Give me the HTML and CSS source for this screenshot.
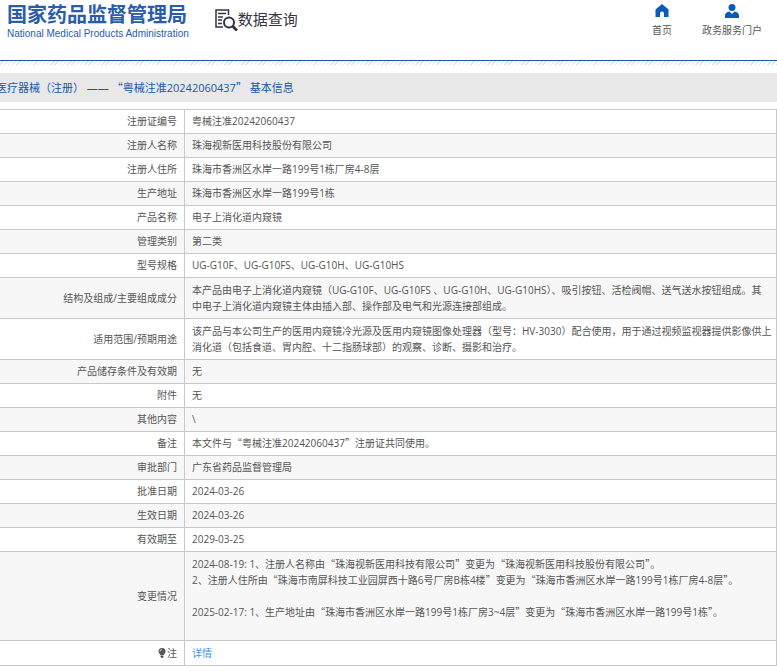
FILE: index.html
```html
<!DOCTYPE html>
<html lang="zh-CN">
	<head>
		<meta charset="utf-8">
		<title>数据查询</title>
		<link rel="stylesheet" href="styles.css">
	</head>
	<body>
		<header class="header">
			<div class="logo">
				<div class="logo-cn">国家药品监督管理局</div>
				<div class="logo-en">National Medical Products Administration</div>
			</div>
			<h1 class="query">
				<svg width="23" height="22" viewBox="0 0 23 22" fill="none" stroke="#35353f">
					<path d="M13.500 6V1H1v17h7" stroke-width="1.500"/>
					<path d="M3 4.500h8M3 8h5M3 11h4M3 14.500h4" stroke-width="1.500"/>
					<circle cx="14" cy="13.500" r="5" stroke-width="2"/>
					<path d="M17.500 17l4.500 4.500" stroke-width="3"/>
				</svg>
				<span>数据查询</span>
			</h1>
			<nav class="nav">
				<a href="#">
					<svg width="14" height="14" viewBox="0 0 14 14" fill="#0a5cb8"><path d="M7 0L0.500 5.500V13H5V9.500a2 2 0 0 1 4 0V13h4.500V5.500z"/></svg>
					<span>首页</span>
				</a>
				<a href="#">
					<svg width="14" height="14" viewBox="0 0 14 14" fill="#0a5cb8"><circle cx="7" cy="3.500" r="3.500"/><path d="M0 14v-2.500C0 9 2 8 4.500 7.500L7 10l2.500-2.500C12 8 14 9 14 11.500V14z"/></svg>
					<span>政务服务门户</span>
				</a>
			</nav>
		</header>
		<div class="stripes"></div>

		<h2 class="title">医疗器械（注册） —— <span class="cjk">“</span>粤械注准20242060437<span class="cjk">”</span> 基本信息</h2>

		<table class="info">
			<tr><th>注册证编号</th><td>粤械注准20242060437</td></tr>
			<tr><th>注册人名称</th><td>珠海视新医用科技股份有限公司</td></tr>
			<tr><th>注册人住所</th><td>珠海市香洲区水岸一路199号1栋厂房4-8层</td></tr>
			<tr><th>生产地址</th><td>珠海市香洲区水岸一路199号1栋</td></tr>
			<tr><th>产品名称</th><td>电子上消化道内窥镜</td></tr>
			<tr><th>管理类别</th><td>第二类</td></tr>
			<tr><th>型号规格</th><td>UG-G10F、UG-G10FS、UG-G10H、UG-G10HS</td></tr>
			<tr class="long"><th>结构及组成/主要组成成分</th><td>本产品由电子上消化道内窥镜（UG-G10F、UG-G10FS 、UG-G10H、UG-G10HS）、吸引按钮、活检阀帽、送气送水按钮组成。其<br>中电子上消化道内窥镜主体由插入部、操作部及电气和光源连接部组成。</td></tr>
			<tr class="long"><th>适用范围/预期用途</th><td>该产品与本公司生产的医用内窥镜冷光源及医用内窥镜图像处理器（型号：HV-3030）配合使用，用于通过视频监视器提供影像供上消化道（包括食道、胃内腔、十二指肠球部）的观察、诊断、摄影和治疗。</td></tr>
			<tr><th>产品储存条件及有效期</th><td>无</td></tr>
			<tr><th>附件</th><td>无</td></tr>
			<tr><th>其他内容</th><td>\</td></tr>
			<tr><th>备注</th><td>本文件与<span class="cjk">“</span>粤械注准20242060437<span class="cjk">”</span>注册证共同使用。</td></tr>
			<tr><th>审批部门</th><td>广东省药品监督管理局</td></tr>
			<tr><th>批准日期</th><td>2024-03-26</td></tr>
			<tr><th>生效日期</th><td>2024-03-26</td></tr>
			<tr><th>有效期至</th><td>2029-03-25</td></tr>
			<tr class="long">
				<th>变更情况</th>
				<td>
					2024-08-19: 1、注册人名称由<span class="cjk">“</span>珠海视新医用科技有限公司<span class="cjk">”</span>变更为<span class="cjk">“</span>珠海视新医用科技股份有限公司<span class="cjk">”</span>。<br>
					2、注册人住所由<span class="cjk">“</span>珠海市南屏科技工业园屏西十路6号厂房B栋4楼<span class="cjk">”</span>变更为<span class="cjk">“</span>珠海市香洲区水岸一路199号1栋厂房4-8层<span class="cjk">”</span>。<br>
					<br>
					2025-02-17: 1、生产地址由<span class="cjk">“</span>珠海市香洲区水岸一路199号1栋厂房3~4层<span class="cjk">”</span>变更为<span class="cjk">“</span>珠海市香洲区水岸一路199号1栋<span class="cjk">”</span>。<br>
					<br>
				</td>
			</tr>
			<tr class="long">
				<th><svg class="bulb" width="8" height="10" viewBox="0 0 8 10" fill="#555"><path d="M4 0a3.500 3.500 0 0 0-3.500 3.500C0.500 5.500 2.500 6 2.500 7.500h3C5.500 6 7.500 5.500 7.500 3.500A3.500 3.500 0 0 0 4 0zM2.500 8h3v1l-1 1h-1l-1-1z"/><path d="M2 3.500a2 2 0 0 1 2-2" fill="none" stroke="#ccc"/></svg>注</th>
				<td><a class="detail" href="#">详情</a></td>
			</tr>
		</table>
	</body>
</html>
```
FILE: styles.css
```css
body {
	margin: 0;
	background: #fff;
	color: #555;
	font-family: "Open Sans", "Noto Sans CJK SC", sans-serif;
	font-size: 10px;
	line-height: 16px;
	overflow-x: hidden;
}

a {
	color: inherit;
	text-decoration: none;
}

/* full-width quotation marks */
.cjk {
	font-family: "Noto Sans CJK SC", sans-serif;
}

.header {
	display: flex;
	align-items: flex-start;
	height: 60px;
	box-sizing: border-box;
	padding: 2px 15px 0 7px;
}

.logo {
	color: #2a5caa;
	white-space: nowrap;
}

.logo-cn {
	font-family: "Noto Sans CJK SC", sans-serif;
	font-size: 20px;
	line-height: 24px;
	font-weight: bold;
}

.logo-en {
	font-family: "Liberation Sans", Arial, sans-serif;
	font-size: 10px;
	line-height: 16px;
}

.query {
	display: flex;
	margin: 7px 0 0 26px;
	color: #35353f;
	font-size: 15px;
	line-height: 20px;
	font-weight: normal;
}

.nav {
	display: flex;
	gap: 30px;
	margin-left: auto;
}

.nav a {
	display: flex;
	flex-direction: column;
	align-items: center;
	gap: 4px;
	padding-top: 2px;
}

.stripes {
	height: 4px;
	border-top: 1px solid #1c5a9c;
	background: repeating-linear-gradient(135deg, #fff 0 2px, #d3e5f3 2px 3px);
}

.title {
	margin: 8px 0;
	padding: 2px 0;
	background: #e8e8e8;
	color: #1558a8;
	font-size: 11px;
	line-height: 24px;
	font-weight: normal;
	text-indent: -4px;
	white-space: nowrap;
}

.info {
	width: 100%;
	table-layout: fixed;
	border-spacing: 0;
	border-top: 1px solid #c8c8c8;
	border-right: 1px solid #c8c8c8;
	margin-top: -1px;
}

.info th,
.info td {
	box-sizing: border-box;
	padding: 3px 2px 4px 7px;
	border-bottom: 1px solid #c8c8c8;
	text-align: left;
}

.info th {
	width: 185px;
	padding-right: 7px;
	border-right: 1px solid #c8c8c8;
	font-weight: normal;
	text-align: right;
}

.info .long th,
.info .long td {
	padding-top: 4px;
}

.info tr:nth-child(even) {
	background: #f7f7f7;
}

.bulb {
	margin-right: 1px;
	vertical-align: -1px;
}

.detail {
	color: #3b94ea;
}
```
